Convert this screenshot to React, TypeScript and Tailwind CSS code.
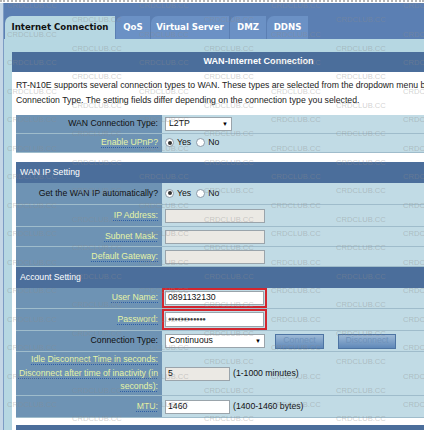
import type { ReactNode } from 'react';

const tabs = [
  { name: 'Internet Connection', w: 'w-[110px]', active: true },
  { name: 'QoS', w: 'w-[34px]' },
  { name: 'Virtual Server', w: 'w-[78px]' },
  { name: 'DMZ', w: 'w-[36px]' },
  { name: 'DDNS', w: 'w-[41px]' },
];

const Radio = ({ checked, label }: { checked?: boolean; label: string }) => (
  <span className="flex items-center gap-[3px] mr-[5px]">
    <span className="w-[9px] h-[9px] rounded-full border border-[#8a9aa8] bg-white flex items-center justify-center">
      {checked && <span className="w-[4px] h-[4px] rounded-full bg-[#333]" />}
    </span>
    <span>{label}</span>
  </span>
);

const Label = ({ text, tip }: { text: ReactNode; tip?: boolean }) =>
  tip ? (
    <span className="text-[#e6f4a6] underline decoration-dotted decoration-[#2e5fa6] underline-offset-[2px]">{text}</span>
  ) : (
    <span className="text-[#111]">{text}</span>
  );

const Row = ({
  label,
  tip,
  h,
  children,
}: {
  label: ReactNode;
  tip?: boolean;
  h: string;
  children?: ReactNode;
}) => (
  <div className={`flex ${h} border-b border-[#9fbccb]`}>
    <div className="w-[146px] shrink-0 bg-[#6e93b4] flex items-center justify-end pr-[4px] text-right leading-[13.5px]">
      <Label text={label} tip={tip} />
    </div>
    <div className="flex-1 bg-[#c1dbe5] flex items-center pl-[3px] text-[#111]">{children}</div>
  </div>
);

const Input = ({ value, disabled, w = 'w-[100px]' }: { value?: string; disabled?: boolean; w?: string }) => (
  <div
    className={`${w} h-[14px] border border-[#9aa4ab] flex items-center px-[2px] ${
      disabled ? 'bg-[#ebe9e4]' : 'bg-white'
    }`}
  >
    {value}
  </div>
);

const Select = ({ value, w }: { value: string; w: string }) => (
  <div className={`${w} h-[14px] bg-white border border-[#9aa4ab] flex items-center justify-between px-[3px]`}>
    <span>{value}</span>
    <span className="text-[6px] text-black">▼</span>
  </div>
);

const SectionHead = ({ title }: { title: string }) => (
  <div className="h-[21px] bg-[#4b6e9b] flex items-center pl-[4px] text-white">{title}</div>
);

const Watermark = () => {
  const marks: { x: number; y: number }[] = [];
  for (let r = 0; r < 31; r++) {
    const start = r % 2 === 0 ? 7 : 72;
    for (let x = start; x < 424; x += 132) marks.push({ x, y: 2 + r * 14.25 });
  }
  return (
    <div className="absolute inset-0 pointer-events-none">
      {marks.map((m, i) => (
        <span
          key={i}
          className="absolute text-[7.6px] leading-none text-[#8c8c8c]/40"
          style={{ left: m.x, top: m.y }}
        >
          CRDCLUB.CC
        </span>
      ))}
    </div>
  );
};

export default function App() {
  return (
    <div className="relative w-[424px] h-[430px] overflow-hidden bg-white font-['Liberation_Sans',Arial,sans-serif] text-[8.7px]">
      <div className="h-[3px] bg-white border-t-2 border-dotted border-[#b5b5b5]" />
      <div className="flex h-[427px]">
        <div className="w-[4px] shrink-0 bg-[#c4d6e6] border-r border-[#7d9cc4]" />
        <div className="flex-1 min-w-0 bg-[#b6d7e2]">
          <div className="h-[36px] bg-[#5b7fb3] flex items-end gap-px pl-px">
            {tabs.map((t) => (
              <div
                key={t.name}
                className={`${t.w} h-[23px] shrink-0 rounded-tl-[7px] flex items-center justify-center font-['DejaVu_Sans',Verdana,sans-serif] font-bold text-[8.6px] ${
                  t.active ? 'bg-[#b6d7e2] text-[#111]' : 'bg-[#6b91c5] text-white'
                }`}
              >
                {t.name}
              </div>
            ))}
          </div>
          <div className="h-[13px]" />
          <div className="ml-[8px] w-[493px] bg-white">
            <div className="h-[20px] bg-[#4b6e9b] flex items-center justify-center text-white font-bold text-[9.1px]">
              WAN-Internet Connection
            </div>
            <div className="h-[43px] px-[4px] pt-[6px] leading-[15px] text-[#222]">
              RT-N10E supports several connection types to WAN. These types are selected from the dropdown menu beside WAN
              Connection Type. The setting fields differ depending on the connection type you selected.
            </div>
            <div className="ml-[4px]">
              <Row label="WAN Connection Type:" h="h-[19px]">
                <Select value="L2TP" w="w-[67px]" />
              </Row>
              <Row label="Enable UPnP?" tip h="h-[19px]">
                <Radio checked label="Yes" />
                <Radio label="No" />
              </Row>
              <div className="h-[9px] bg-white" />
              <SectionHead title="WAN IP Setting" />
              <Row label="Get the WAN IP automatically?" h="h-[22px]">
                <Radio checked label="Yes" />
                <Radio label="No" />
              </Row>
              <Row label="IP Address:" tip h="h-[22px]">
                <Input disabled />
              </Row>
              <Row label="Subnet Mask:" tip h="h-[20px]">
                <Input disabled />
              </Row>
              <Row label="Default Gateway:" tip h="h-[20px]">
                <Input disabled />
              </Row>
              <SectionHead title="Account Setting" />
              <Row label="User Name:" tip h="h-[21px]">
                <div className="-ml-[3px] border-2 border-[#d3262e] p-px">
                  <Input value="0891132130" w="w-[99px]" />
                </div>
              </Row>
              <Row label="Password:" tip h="h-[22px]">
                <div className="-ml-[3px] border-2 border-[#d3262e] p-px">
                  <div className="w-[99px] h-[15px] bg-white border border-[#9aa4ab] flex items-center px-[2px] text-[6px] tracking-[-0.5px] text-[#444]">
                    ●●●●●●●●●●●●
                  </div>
                </div>
              </Row>
              <Row label="Connection Type:" h="h-[21px]">
                <Select value="Continuous" w="w-[100px]" />
                <div className="ml-[10px] w-[49px] h-[15px] border border-[#4d74a3] bg-gradient-to-b from-[#9db9d6] to-[#5f88b8] flex items-center justify-center text-[#6f92ba]">
                  Connect
                </div>
                <div className="ml-[14px] w-[58px] h-[15px] border border-[#4d74a3] bg-gradient-to-b from-[#9db9d6] to-[#5f88b8] flex items-center justify-center text-[#6f92ba]">
                  Disconnect
                </div>
              </Row>
              <Row
                label={
                  <>
                    Idle Disconnect Time in seconds:
                    <br />
                    Disconnect after time of inactivity (in
                    <br />
                    seconds):
                  </>
                }
                tip
                h="h-[44px]"
              >
                <Input value="5" disabled w="w-[65px]" />
                <span className="ml-[3px]">(1-1000 minutes)</span>
              </Row>
              <Row label="MTU:" tip h="h-[22px]">
                <Input value="1460" w="w-[65px]" />
                <span className="ml-[3px]">(1400-1460 bytes)</span>
              </Row>
              <div className="h-[7px] bg-white" />
              <div className="h-[20px] bg-[#4b6e9b]" />
            </div>
          </div>
        </div>
      </div>
      <Watermark />
    </div>
  );
}
